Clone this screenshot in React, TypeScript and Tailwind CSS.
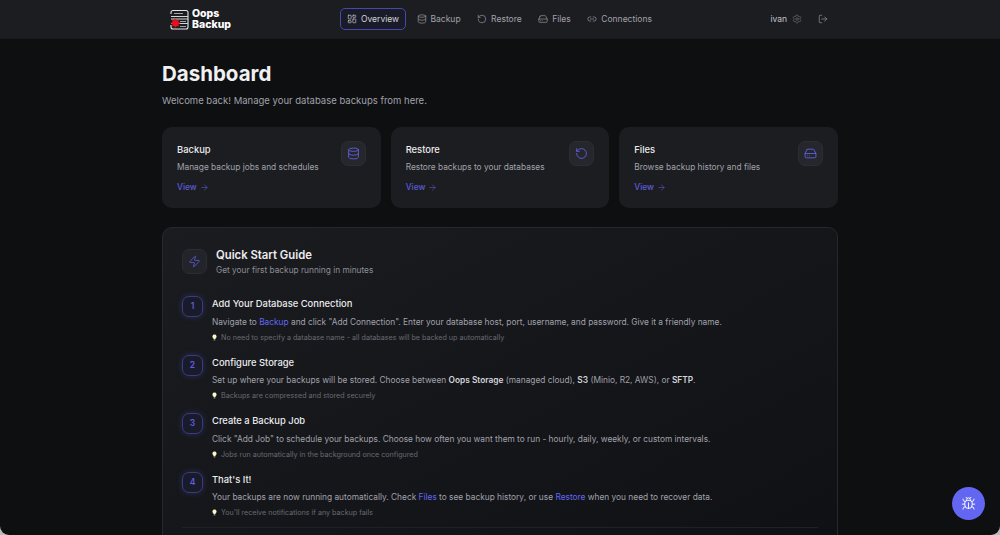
import { ArrowRight, Bug, Database, HardDrive, LayoutDashboard, Link2, LogOut, RotateCcw, Settings, Zap } from 'lucide-react';
import type { ReactNode } from 'react';

const navItems = [
  { label: 'Overview', icon: LayoutDashboard, active: true },
  { label: 'Backup', icon: Database, active: false },
  { label: 'Restore', icon: RotateCcw, active: false },
  { label: 'Files', icon: HardDrive, active: false },
  { label: 'Connections', icon: Link2, active: false },
];

const cards = [
  { title: 'Backup', text: 'Manage backup jobs and schedules', icon: Database },
  { title: 'Restore', text: 'Restore backups to your databases', icon: RotateCcw },
  { title: 'Files', text: 'Browse backup history and files', icon: HardDrive },
];

function A({ children }: { children: ReactNode }) {
  return <span className="text-[#6366f1]">{children}</span>;
}

function B({ children }: { children: ReactNode }) {
  return <span className="font-semibold text-[#d4d4d8]">{children}</span>;
}

const steps: { title: string; body: ReactNode; tip: string }[] = [
  {
    title: 'Add Your Database Connection',
    body: (
      <>
        Navigate to <A>Backup</A> and click "Add Connection". Enter your database host, port, username, and password. Give it a friendly name.
      </>
    ),
    tip: 'No need to specify a database name - all databases will be backed up automatically',
  },
  {
    title: 'Configure Storage',
    body: (
      <>
        Set up where your backups will be stored. Choose between <B>Oops Storage</B> (managed cloud), <B>S3</B> (Minio, R2, AWS), or <B>SFTP</B>.
      </>
    ),
    tip: 'Backups are compressed and stored securely',
  },
  {
    title: 'Create a Backup Job',
    body: 'Click "Add Job" to schedule your backups. Choose how often you want them to run - hourly, daily, weekly, or custom intervals.',
    tip: 'Jobs run automatically in the background once configured',
  },
  {
    title: "That's It!",
    body: (
      <>
        Your backups are now running automatically. Check <A>Files</A> to see backup history, or use <A>Restore</A> when you need to recover data.
      </>
    ),
    tip: "You'll receive notifications if any backup fails",
  },
];

function Logo() {
  return (
    <div className="flex items-center gap-[3px]">
      <svg width="19" height="21" viewBox="0 0 19 21" fill="none">
        <path d="M1 5V3.5A2 2 0 0 1 3 1.5h13a2 2 0 0 1 2 2V18a2 2 0 0 1-2 2H3a2 2 0 0 1-2-2V16" stroke="#e5e5e5" strokeWidth="1.1" />
        <path d="M1 7.5h17M1 10h17M1 14.5h17" stroke="#d4d4d4" strokeWidth="1" />
        <path d="M4 4.5h9M10 12.5h6M10 17.5h6" stroke="#9ca3af" strokeWidth="1" />
        <path d="M5.5 9.5l1.3 1.9 2.2-.6-.6 2.2 2 1.2-2 1 .6 2.3-2.2-.6-1.3 1.9-1.3-1.9-2.2.6.6-2.3-2-1 2-1.2-.6-2.2 2.2.6z" fill="#e8111a" />
      </svg>
      <div className="text-[10.5px] leading-[11.5px] font-extrabold text-white">
        <div>Oops</div>
        <div>Backup</div>
      </div>
    </div>
  );
}

function Bulb() {
  return (
    <svg width="5" height="7" viewBox="0 0 6 8" className="shrink-0">
      <path d="M3 .3a2.5 2.5 0 0 1 1.4 4.6l-.2.9H1.8l-.2-.9A2.5 2.5 0 0 1 3 .3z" fill="#fdf6c8" />
      <rect x="2" y="6.1" width="2" height="1.4" fill="#a8a8a8" />
    </svg>
  );
}

export default function App() {
  return (
    <div className="h-[535px] w-full overflow-hidden bg-[#b9babc] font-['Inter',sans-serif]">
      <div className="h-full overflow-hidden rounded-b-[9px] bg-[#0e0f11]">
        <nav className="flex h-[39px] items-center border-b border-[#191a1e] bg-[#1c1d21] pl-[170px] pr-[172px]">
          <div className="w-[170px]">
            <Logo />
          </div>
          <div className="flex items-center gap-[4.5px]">
            {navItems.map((item) => (
              <div
                key={item.label}
                className={`flex h-[22px] items-center gap-[4px] rounded-[5px] px-[6px] text-[8.5px] ${
                  item.active ? 'border border-[#4748a8] bg-[#1a1b28] text-[#d4d4d8]' : 'text-[#a1a1aa]'
                }`}
              >
                <item.icon size={10} strokeWidth={1.5} />
                {item.label}
              </div>
            ))}
          </div>
          <div className="ml-auto flex items-center text-[#a1a1aa]">
            <span className="text-[8.5px] text-[#c4c4cc]">ivan</span>
            <Settings size={10} strokeWidth={1.5} className="ml-[5px] text-[#71717a]" />
            <LogOut size={10} strokeWidth={1.5} className="ml-[16px]" />
          </div>
        </nav>

        <main className="mx-auto w-[676px] pt-[22px]">
          <h1 className="text-[20.5px] leading-[26px] font-bold text-[#f0f0f2]">Dashboard</h1>
          <p className="mt-[7px] text-[9.5px] leading-[14px] text-[#a1a1aa]">Welcome back! Manage your database backups from here.</p>

          <div className="mt-[19px] grid grid-cols-3 gap-[10px]">
            {cards.map((card) => (
              <div key={card.title} className="flex h-[81px] justify-between rounded-[10px] bg-[#1c1d21] px-[15px] pt-[15px]">
                <div>
                  <h3 className="text-[9.4px] leading-[15px] font-medium text-[#ececee]">{card.title}</h3>
                  <p className="mt-[3.5px] text-[8.33px] leading-[13px] text-[#a1a1aa]">{card.text}</p>
                  <div className="mt-[7.5px] flex items-center gap-[3px] text-[8.33px] leading-[13px] font-medium text-[#5b5bd6]">
                    View <ArrowRight size={9} strokeWidth={1.5} />
                  </div>
                </div>
                <div className="-mt-[1px] flex h-[25px] w-[25px] items-center justify-center rounded-[7px] border border-[#2c2d33] bg-[#26272c] text-[#5f5fdc]">
                  <card.icon size={13} strokeWidth={1.7} />
                </div>
              </div>
            ))}
          </div>

          <section className="mt-[19px] rounded-t-[10px] border border-[#26282d] bg-gradient-to-br from-[#1a1c20] to-[#0f1014] px-[19px] pt-[19.5px]">
            <div className="flex items-center gap-[9px]">
              <div className="flex h-[25px] w-[25px] items-center justify-center rounded-[7px] border border-[#2c2d33] bg-[#222429] text-[#5f5fdc]">
                <Zap size={13} strokeWidth={1.5} />
              </div>
              <div>
                <h2 className="text-[11.3px] leading-[15px] font-semibold text-[#ececee]">Quick Start Guide</h2>
                <p className="mt-[1px] text-[8.3px] leading-[12px] text-[#8e8e96]">Get your first backup running in minutes</p>
              </div>
            </div>

            <div className="mt-[20.5px]">
              {steps.map((step, i) => (
                <div key={step.title} className="flex h-[58.5px] gap-[9px]">
                  <div className="flex h-[21px] w-[21px] shrink-0 items-center justify-center rounded-[7px] border border-[#3a3b80] bg-[#1a1b2a] text-[8.5px] font-semibold text-[#5f5fdc] shadow-[0_0_6px_rgba(99,102,241,0.25)]">
                    {i + 1}
                  </div>
                  <div className="pt-[1px]">
                    <h4 className="text-[9.4px] leading-[13px] font-medium text-[#ececee]">{step.title}</h4>
                    <p className="mt-[5.5px] text-[8.33px] leading-[13px] text-[#a1a1aa]">{step.body}</p>
                    <div className="mt-[3px] flex items-center gap-[4px] text-[7.15px] leading-[11px] text-[#6a6a72]">
                      <Bulb />
                      {step.tip}
                    </div>
                  </div>
                </div>
              ))}
            </div>
            <div className="mt-[-3px] h-[60px] border-t border-[#1f2126]" />
          </section>
        </main>
      </div>

      <button className="fixed bottom-[15px] right-[15px] flex h-[33px] w-[33px] items-center justify-center rounded-full bg-[#6366f1] text-white">
        <Bug size={15} strokeWidth={1.5} />
      </button>
    </div>
  );
}
